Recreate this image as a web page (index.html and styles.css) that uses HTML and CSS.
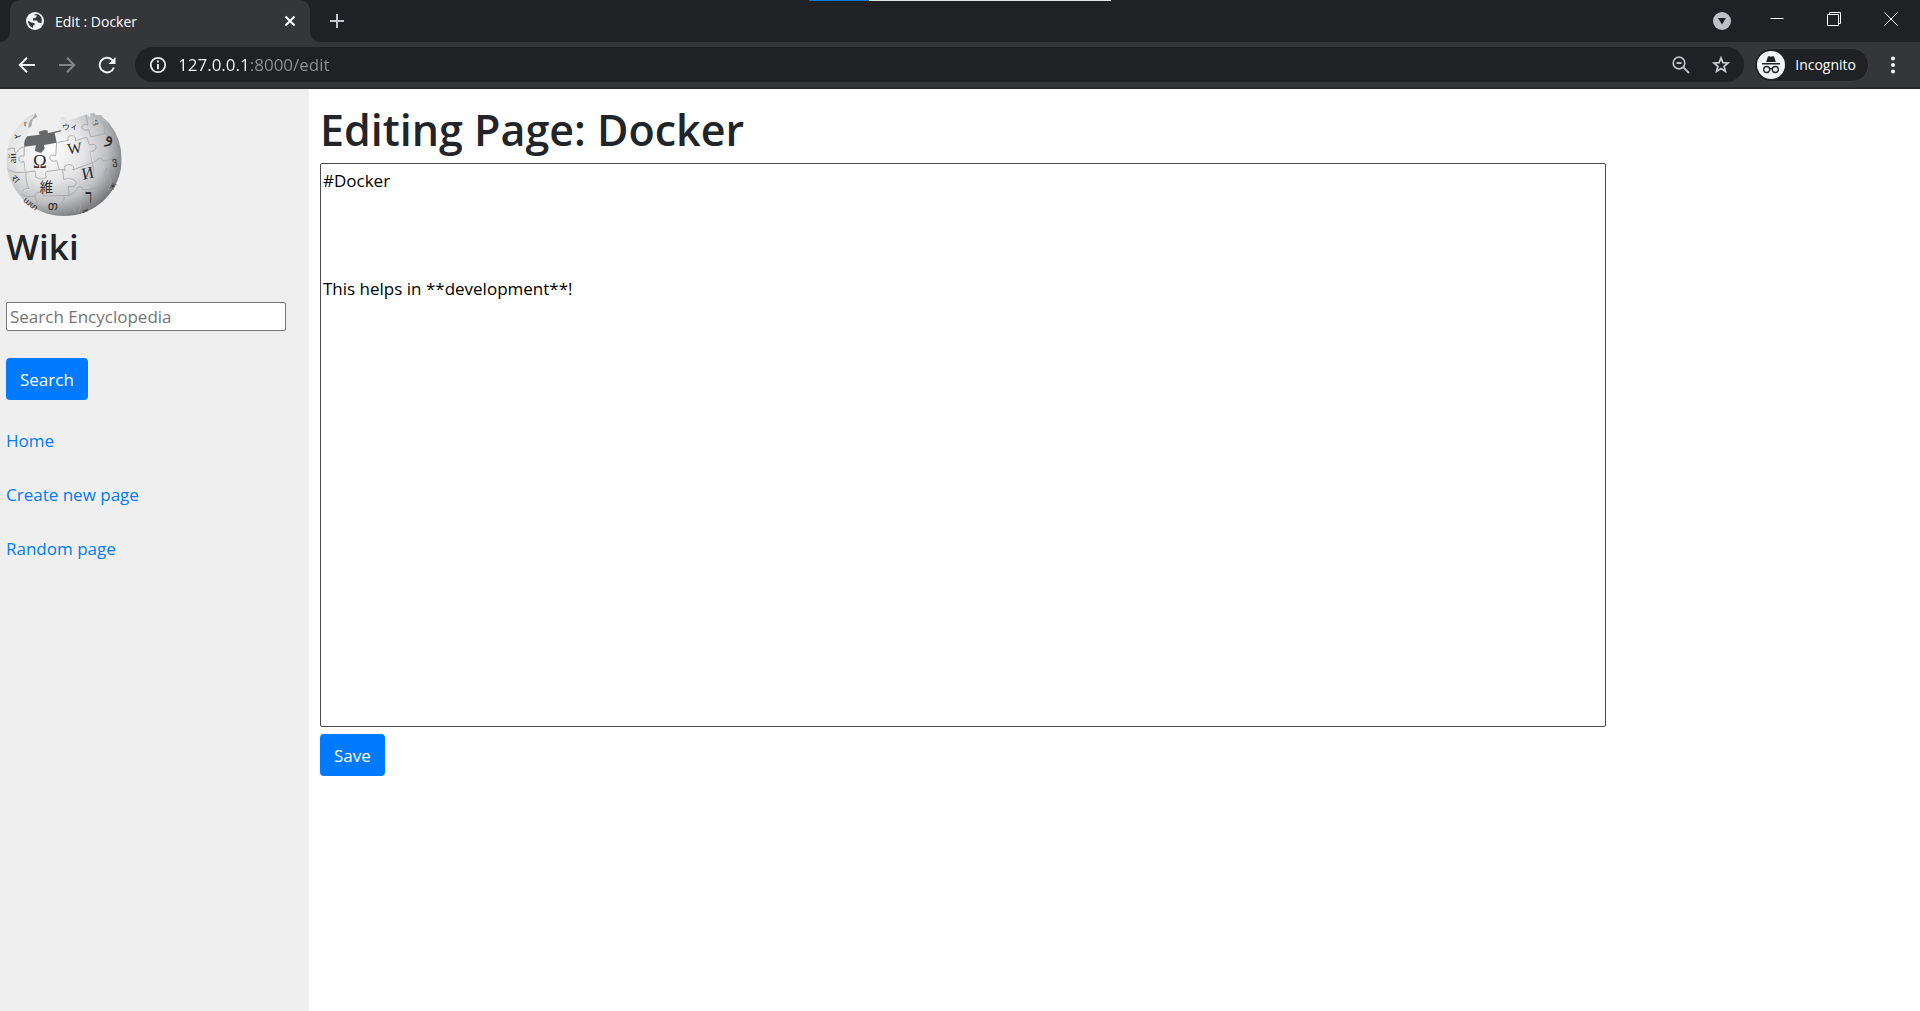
FILE: index.html
```html
<!DOCTYPE html>
<html lang="en">
<head>
<meta charset="utf-8">
<title>Edit : Docker</title>
<link rel="stylesheet" href="styles.css">
</head>
<body>
<header class="browser">
  <div class="tabstrip">
    <div class="tab">
      <svg class="favicon" width="18" height="18" viewBox="0 0 18 18"><circle cx="9" cy="9" r="9" fill="#f1f3f4"/><path d="M2 8.500 L5 10.500 L8.500 11 L8.500 13 L7 13.500 L7 16 Q2 14 2 8.500 Z M8 3 L11 3.500 L10 5.500 L7 6.500 L7 8.500 L11 8.500 L12 10.500 L15.500 11 Q17 5.500 12.500 2.600 Q9.500 1.200 8 3 Z" fill="#35363a"/></svg>
      <span class="tab-title">Edit : Docker</span>
      <button class="icon-btn" aria-label="Close tab"><svg width="12" height="12" viewBox="0 0 12 12"><path d="M1.500 1.500 L10.500 10.500 M10.500 1.500 L1.500 10.500" stroke="#fff" stroke-width="2" fill="none"/></svg></button>
    </div>
    <button class="icon-btn new-tab" aria-label="New tab"><svg width="16" height="16" viewBox="0 0 16 16"><path d="M8 1 V15 M1 8 H15" stroke="#c4c7cb" stroke-width="2"/></svg></button>
    <div class="window-controls">
      <button class="icon-btn tab-search" aria-label="Search tabs"><svg width="18" height="18" viewBox="0 0 18 18"><circle cx="9" cy="9" r="9" fill="#bdc1c6"/><path d="M5 6 H13 L9 12.500 Z" fill="#202124"/></svg></button>
      <button class="icon-btn" aria-label="Minimize"><svg width="14" height="14" viewBox="0 0 14 14"><path d="M0.500 6.500 H13.500" stroke="#fff"/></svg></button>
      <button class="icon-btn" aria-label="Restore"><svg width="14" height="14" viewBox="0 0 14 14"><path d="M.5 2.500 H11.500 V13.500 H.5 Z M2.500 2 V.5 H13.500 V11.500 H12" stroke="#fff" fill="none"/></svg></button>
      <button class="icon-btn" aria-label="Close window"><svg width="14" height="14" viewBox="0 0 14 14"><path d="M.5 .5 L13.500 13.500 M13.500 .5 L.5 13.500" stroke="#fff" fill="none"/></svg></button>
    </div>
    <div class="top-strip"></div>
  </div>
  <div class="toolbar">
    <div class="nav">
      <button class="icon-btn" aria-label="Back"><svg width="18" height="16" viewBox="0 0 18 16"><path d="M17 8 H2 M9 .8 L1.800 8 L9 15.200" stroke="#f1f3f4" stroke-width="2" fill="none"/></svg></button>
      <button class="icon-btn" aria-label="Forward"><svg width="18" height="16" viewBox="0 0 18 16"><path d="M1 8 H16 M9 .8 L16.200 8 L9 15.200" stroke="#85868a" stroke-width="2" fill="none"/></svg></button>
      <button class="icon-btn" aria-label="Reload"><svg width="18" height="18" viewBox="0 0 18 18"><path d="M15.900 11.500 A7.300 7.300 0 1 1 14.200 3.900 L15.500 5.200" stroke="#f1f3f4" stroke-width="2" fill="none"/><path d="M17.500 1 V8 H10.500 Z" fill="#f1f3f4"/></svg></button>
    </div>
    <div class="omnibox">
      <svg width="18" height="18" viewBox="0 0 18 18"><circle cx="9" cy="9" r="7.200" stroke="#e8eaed" stroke-width="1.800" fill="none"/><path d="M9 4.600 V6.400 M9 8 V13.200" stroke="#e8eaed" stroke-width="1.900"/></svg>
      <input class="address" type="text" aria-label="Address" value="127.0.0.1:8000/edit">
      <button class="icon-btn" aria-label="Zoom"><svg width="18" height="18" viewBox="0 0 18 18"><circle cx="7" cy="7" r="5.800" stroke="#bdc1c6" stroke-width="1.700" fill="none"/><path d="M4.500 7 H9.500 M11.200 11.200 L17 17" stroke="#bdc1c6" stroke-width="1.900"/></svg></button>
      <button class="icon-btn" aria-label="Bookmark this page"><svg width="18" height="18" viewBox="0 0 18 18"><path d="M9 1.900 L10.900 6.600 L16 7 L12.100 10.300 L13.400 15.300 L9 12.600 L4.600 15.300 L5.900 10.300 L2 7 L7.100 6.600 Z" stroke="#c8cbcf" stroke-width="1.700" fill="none"/></svg></button>
    </div>
    <button class="incognito"><svg width="28" height="28" viewBox="0 0 28 28"><circle cx="14" cy="14" r="14" fill="#f1f3f4"/><path d="M9.200 11 L10.800 5.800 Q11.200 4.800 12.300 5.300 L14 5.800 L15.700 5.300 Q16.800 4.800 17.200 5.800 L18.800 11 Z M5 12 H23 V13.400 H5 Z" fill="#202124"/><circle cx="9.700" cy="18.500" r="3" fill="none" stroke="#202124" stroke-width="1.300"/><circle cx="18.300" cy="18.500" r="3" fill="none" stroke="#202124" stroke-width="1.300"/><path d="M12.700 18 Q14 17 15.300 18" fill="none" stroke="#202124" stroke-width="1.300"/></svg>Incognito</button>
    <button class="icon-btn menu" aria-label="Menu"><svg width="6" height="18" viewBox="0 0 6 18"><g fill="#f1f3f4"><circle cx="3" cy="2.500" r="2"/><circle cx="3" cy="9" r="2"/><circle cx="3" cy="15.500" r="2"/></g></svg></button>
  </div>
</header>
<div class="page">
  <aside class="sidebar">
    <svg class="globe" width="116" height="104" viewBox="18 51 348 312" role="img" aria-label="Wiki globe">
      <defs>
        <radialGradient id="ball" cx=".36" cy=".36" r=".68"><stop offset="0" stop-color="#fff"/><stop offset=".45" stop-color="#e6e6e7"/><stop offset=".75" stop-color="#bfc0c2"/><stop offset="1" stop-color="#77787b"/></radialGradient>
        <clipPath id="rim"><path d="M66 82 Q82 62 110 55 L107 69 L98 72 Q92 82 94 94 L87 98 Q91 108 84 112 L79 120 L76 155 L102 151 L108 158 L174 142 L170 112 L184 106 L160 108 L172 104 L165 98 L184 91 L178 79 L183 66 L197 66 L202 78 L260 58 L270 66 L271 55 L283 54 L287 61 L302 65 L305 73 L326 83 Q365 130 365 193 A173 170 0 0 1 19 193 Q20 130 66 82 Z"/></clipPath>
      </defs>
      <g clip-path="url(#rim)">
        <rect x="18" y="51" width="348" height="312" fill="url(#ball)"/>
        <g fill="none" stroke="#a3a4a6" stroke-width="2.500">
          <path d="M22 164 Q34 157 45 160 Q38 173 51 172 Q57 157 74 156 M73 157 L72 184 Q56 178 57 193 Q58 207 72 199 L76 232 Q48 237 22 224 M76 232 L105 228 Q108 239 106 246 Q123 258 139 247 Q133 238 139 230 L178 224 L170 197 Q152 203 149 188 Q150 176 167 182 L170 143 M170 143 L205 136 Q199 120 220 122 Q230 128 226 137 L260 127 M258 61 L264 90 Q247 84 245 98 Q254 110 266 104 L272 126 Q290 122 314 116 Q318 94 303 72 M314 116 Q334 123 350 145 M260 127 L269 150 Q289 143 288 159 Q284 172 270 168 L277 203 Q291 200 293 192 Q306 187 309 199 Q323 198 354 182 M178 224 Q188 222 195 226 Q190 207 211 209 Q226 214 218 225 L277 203 M188 224 L191 253 Q224 246 229 265 Q222 281 205 273 L207 301 M277 203 Q282 226 282 232 M320 219 Q310 232 317 245 Q334 242 333 262 L325 285 M207 301 Q230 291 232 278 Q244 270 250 284 Q279 285 324 268 M78 232 Q77 266 87 280 Q68 279 66 298 Q83 310 105 304 Q106 291 120 292 Q132 295 130 303 L207 301 M105 304 Q112 338 135 344 M190 303 Q199 311 185 321 Q192 342 221 336 L226 354 M257 288 Q263 312 241 323 Q244 340 236 352"/>
        </g>
        <g fill="none" stroke="#fff" stroke-opacity=".65" stroke-width="2"><path d="M74 186 L78 231 M106 249 Q123 261 139 250 M172 146 L206 139 M272 170 L279 204 M193 256 Q217 249 226 266 M89 283 Q70 282 68 298"/></g>
      </g>
      <path d="M82 124 L119 119 L116 110 L134 105 L144 107 L143 115 L184 105 L184 109 L164 114 L170 143 L132 150 L134 162 L123 174 L105 168 L106 158 L108 151 L73 155 Q70 137 82 124 Z" fill="#666768"/>
      <path d="M107 55 L111 65 L98 74 L94 94 L85 100 Q84 80 98 70 Z" fill="#a7a8aa"/>
      <path d="M270 56 L282 66 L302 66 L304 76 L330 88 L322 78 L308 67 L304 60 L287 60 Z" fill="#b6b7b9"/>
      <g class="glyphs">
        <text x="99" y="220" font-size="55">Ω</text>
        <text x="204" y="178" font-size="46" transform="rotate(-7 204 178)">W</text>
        <text x="249" y="254" font-size="50" transform="rotate(-12 249 254)">И</text>
        <text x="119" y="292" font-size="40">維</text>
        <text x="187" y="106" font-size="24" transform="rotate(-4 187 106)">ウィ</text>
        <text x="256" y="315" font-size="42" font-weight="bold">ך</text>
        <text x="314" y="142" font-size="54">و</text>
        <text x="278" y="92" font-size="27" transform="rotate(-20 278 92)">ය</text>
        <text x="43" y="131" font-size="26" transform="rotate(-20 43 131)">ـد</text>
        <text x="72" y="94" font-size="24">r</text>
        <text x="49" y="205" font-size="31" transform="rotate(-90 49 205)">ай</text>
        <text x="33" y="253" font-size="28" transform="rotate(45 33 253)">रा</text>
        <text x="337" y="210" font-size="32" transform="rotate(-8 337 210)">ვ</text>
        <text x="143" y="344" font-size="38">თ</text>
        <text x="340" y="285" font-size="28" transform="rotate(-60 340 285)">ж</text>
        <text x="68" y="318" font-size="25" transform="rotate(38 68 318)">ատ</text>
        <text x="250" y="356" font-size="22" transform="rotate(-23 250 356)">መ</text>
      </g>
    </svg>
    <h2 class="brand">Wiki</h2>
    <form class="search">
      <input class="search-box" type="text" aria-label="Search Encyclopedia" placeholder="Search Encyclopedia">
      <button class="btn" type="button">Search</button>
    </form>
    <nav class="links">
      <a href="#home">Home</a>
      <a href="#create">Create new page</a>
      <a href="#random">Random page</a>
    </nav>
  </aside>
  <main class="content">
    <h1>Editing Page: Docker</h1>
    <textarea class="editor" aria-label="Page content">#Docker



This helps in **development**!</textarea>
    <button class="btn" type="button">Save</button>
  </main>
</div>
</body>
</html>
```
FILE: styles.css
```css
* { box-sizing: border-box; }

body {
  margin: 0;
  min-height: 100vh;
  display: flex;
  flex-direction: column;
  font-family: "Open Sans", "Noto Sans", sans-serif;
  font-size: 17px;
  line-height: 27px;
  color: #212529;
  background: #fff;
}

button, input, textarea { font: inherit; }

svg { display: block; flex: none; }

.icon-btn {
  display: flex;
  padding: 0;
  border: 0;
  background: none;
}

/* Browser frame */
.browser {
  background: #35363a;
  border-bottom: 2px solid #28292c;
}

.tabstrip {
  position: relative;
  display: flex;
  height: 42px;
  padding-left: 10px;
  background: #202124;
}

.tab {
  position: relative;
  display: flex;
  align-items: center;
  width: 300px;
  padding: 0 14px 0 16px;
  border-radius: 10px 10px 0 0;
  background: #35363a;
  color: #fff;
  font-size: 14px;
}

/* Curved feet where the tab meets the toolbar */
.tab::before, .tab::after {
  content: "";
  position: absolute;
  bottom: 0;
  width: 10px;
  height: 10px;
}
.tab::before { left: -10px; background: radial-gradient(circle at 0 0, #202124 10px, #35363a 10px); }
.tab::after { right: -10px; background: radial-gradient(circle at 100% 0, #202124 10px, #35363a 10px); }

.tab-title { flex: 1; margin-left: 11px; }

.new-tab { align-items: center; margin-left: 19px; }

.window-controls {
  display: flex;
  align-items: center;
  gap: 43px;
  margin-left: auto;
  padding: 0 22px 5px 0;
}
.tab-search { margin-right: -4px; padding-top: 5px; }

.top-strip {
  position: absolute;
  top: 0;
  left: calc(50% - 151px);
  width: 302px;
  height: 1px;
  background: linear-gradient(to right, #0078d7 60px, #e3e6e6 60px);
}

.toolbar {
  display: flex;
  align-items: center;
  height: 45px;
  padding: 0 24px 0 18px;
}

.nav { display: flex; align-items: center; gap: 22px; margin-right: 19px; }

.omnibox {
  display: flex;
  flex: 1;
  align-items: center;
  gap: 22px;
  height: 35px;
  padding: 0 14px;
  border-radius: 18px;
  background: #202124;
}

/* The host is bright and the rest of the address is dimmed */
.address {
  flex: 1;
  min-width: 0;
  margin-left: -11px;
  padding: 0;
  border: 0;
  outline: 0;
  color: transparent;
  background: linear-gradient(to right, #fff 70px, #8f9296 70px);
  -webkit-background-clip: text;
  background-clip: text;
}

.incognito {
  display: flex;
  align-items: center;
  gap: 10px;
  height: 34px;
  margin-left: 10px;
  padding: 0 12px 0 2px;
  border: 1px solid #3c3d41;
  border-radius: 17px;
  background: #202124;
  color: #fff;
  font-size: 14px;
}

.menu { margin-left: 21px; }

/* Encyclopedia page */
.page { display: flex; flex: 1; }

.sidebar {
  width: 309px;
  padding: 23px 23px 0 6px;
  background: #efefef;
}

.glyphs { font-family: "Liberation Serif", "Noto Sans CJK JP", "DejaVu Sans", serif; fill: #2b2b2d; }

h1, h2 { margin: 0; font-weight: 600; }

h1 { font-size: 43px; line-height: 54px; margin-bottom: 6px; }

.brand { font-size: 35px; line-height: 43px; margin: 9px 0 34px; }

.search-box {
  display: block;
  width: 100%;
  height: 29px;
  margin-bottom: 27px;
  padding: 0 3px;
  border: 1px solid #767676;
  border-radius: 2px;
  background: #fff;
}
.search-box::placeholder { color: #757575; opacity: 1; }

.btn {
  display: block;
  height: 42px;
  padding: 0 14px;
  border: 0;
  border-radius: 4px;
  background: #007bff;
  color: #fff;
}

.links {
  display: flex;
  flex-direction: column;
  align-items: flex-start;
  gap: 27px;
  margin-top: 27px;
}
.links a { color: #007bff; text-decoration: none; }

.content { flex: 1; padding: 14px 0 0 11px; }

.editor {
  box-sizing: content-box;
  display: block;
  width: 80%;
  height: 557px;
  margin-bottom: 7px;
  padding: 3px 2px 2px;
  border: 1px solid #4c4c4c;
  border-radius: 2px;
  resize: none;
  color: #000;
}
```
